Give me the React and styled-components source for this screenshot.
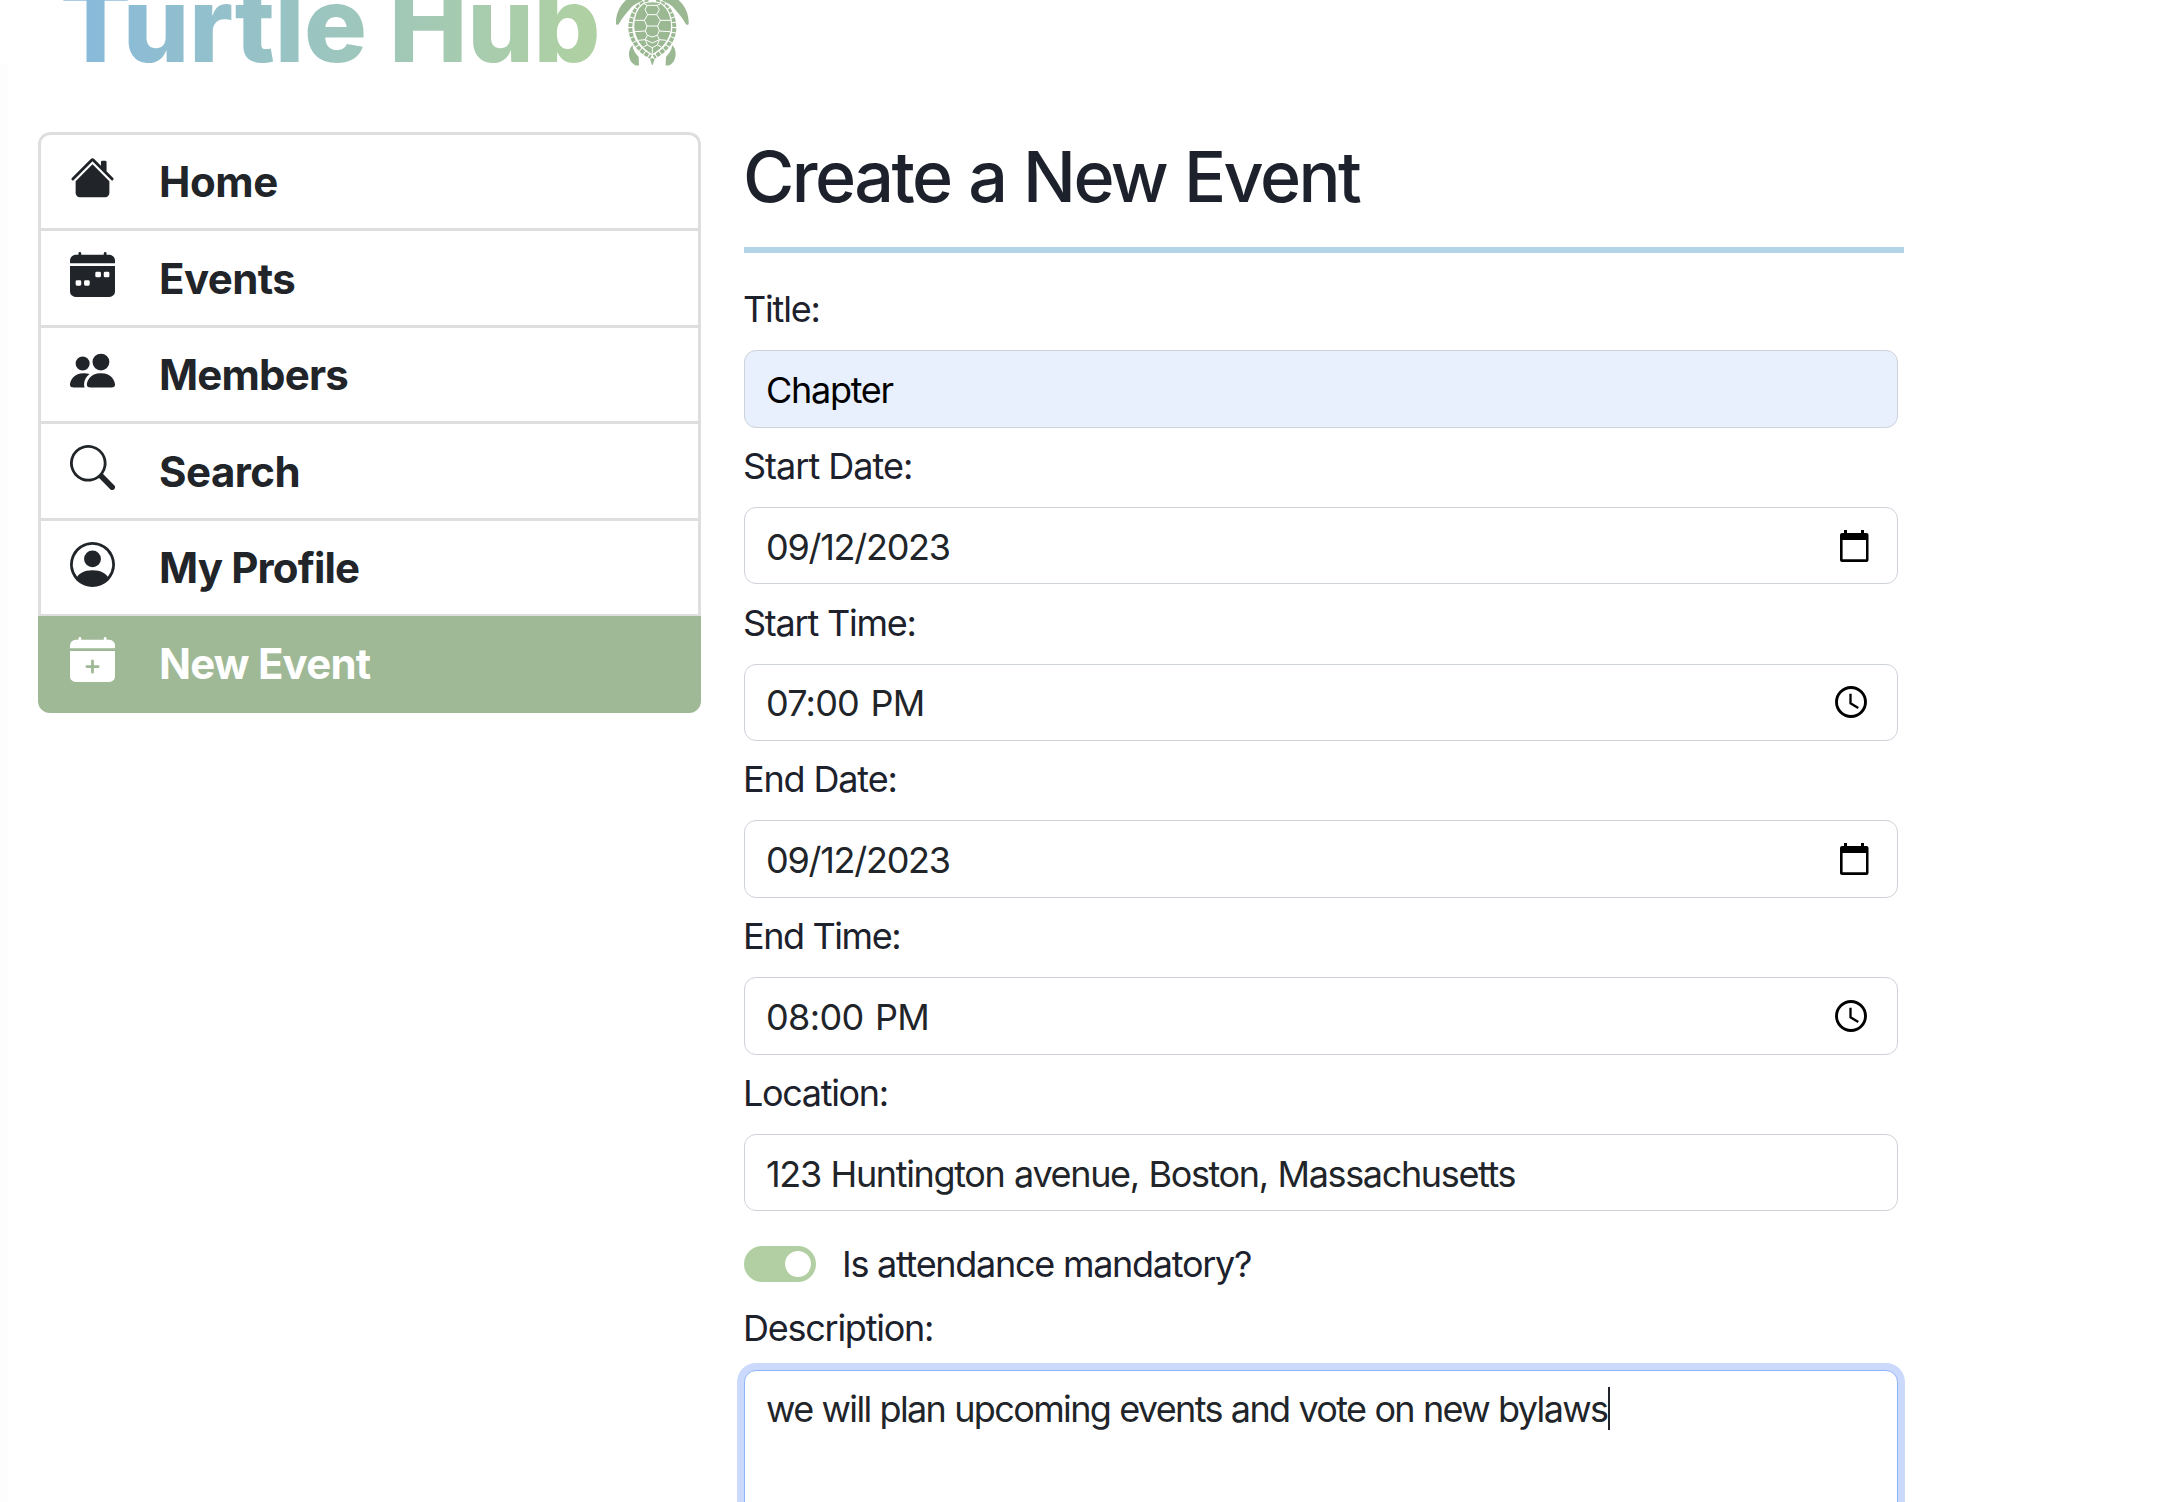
import React from "react";
import styled, { createGlobalStyle } from "styled-components";
import {
  BsHouseFill,
  BsCalendarWeekFill,
  BsPeopleFill,
  BsSearch,
  BsPersonCircle,
  BsCalendarPlusFill,
} from "react-icons/bs";

const GlobalStyle = createGlobalStyle`
  *, *::before, *::after { box-sizing: border-box; }
  body {
    margin: 0;
    background: #fff;
    color: #212529;
    font-family: Inter, "Liberation Sans", sans-serif;
  }
`;

const Viewport = styled.div`
  height: 1502px;
  overflow: hidden;
  background: linear-gradient(#fdfdfd, #fdfdfd) 0 64px / 8px 100% no-repeat, #fff;
`;

const Header = styled.header`
  display: flex;
  align-items: flex-start;
  height: 127px;
  margin-top: -40px;
  padding-left: 60px;
`;

const Brand = styled.div`
  width: 555px;
  white-space: nowrap;
  line-height: 127px;
`;

const BrandText = styled.span`
  font-size: 105px;
  font-weight: 800;
  letter-spacing: -0.5px;
  color: transparent;
  background: linear-gradient(90deg, #88badb 3%, #afd0a3 96%);
  background-clip: text;
  -webkit-background-clip: text;
`;

const TurtleMark = styled.svg`
  width: 74px;
  height: 100px;
  margin-top: 7px;
  flex: none;
`;

const Layout = styled.div`
  display: flex;
  align-items: flex-start;
  gap: 43px;
  padding: 45px 0 0 38px;
`;

const Nav = styled.nav`
  display: flex;
  flex-direction: column;
  width: 663px;
  flex: none;
  border-radius: 12px;
  overflow: hidden;
`;

const NavItem = styled.a`
  display: flex;
  align-items: flex-start;
  gap: 44px;
  height: 96px;
  padding: 20px 29px 0;
  border: 3px solid #dedede;
  border-bottom: 0;
  color: #212529;

  &:nth-child(even) {
    height: 97px;
    padding-top: 21px;
  }
  &:first-child { border-radius: 12px 12px 0 0; }

  svg { width: 45px; height: 45px; flex: none; }
  &:nth-child(5) svg { margin-top: 1px; }

  &&[aria-current="page"] {
    height: 99px;
    padding: 21px 32px 0;
    border-width: 2px 0 0;
    background: #9fb896;
    color: #fff;
  }
`;

const NavLabel = styled.span`
  margin-top: 1px;
  font-size: 42px;
  font-weight: 700;
  line-height: 51px;
  letter-spacing: ${(p) => p.$track}px;
  white-space: nowrap;
`;

const Main = styled.main`
  width: 1160px;
  padding-top: 2px;
  color: #1c212c;
`;

const Title = styled.h1`
  margin: 0;
  padding-bottom: 28px;
  border-bottom: 6px solid #b4d5e8;
  font-size: 70px;
  font-weight: 500;
  line-height: 85px;
  letter-spacing: -2.55px;
  word-spacing: 1.5px;
  text-indent: -1px;
  white-space: nowrap;
`;

const Form = styled.form`
  display: flex;
  flex-direction: column;
  width: 1154px;
  padding-top: 34px;
`;

const Field = styled.div`
  display: flex;
  flex-direction: column;
  gap: 19px;
  margin-bottom: 16.3px;
`;

const Label = styled.label`
  font-size: 36px;
  line-height: 44px;
  letter-spacing: ${(p) => p.$track}px;
  text-indent: ${(p) => p.$indent ?? -1}px;
  white-space: nowrap;
`;

const Control = styled.div`
  display: flex;
  align-items: center;
  height: 77.5px;
  padding-left: 21px;
  padding-right: ${(p) => p.$inset || 22}px;
  border: 1px solid #ced2d9;
  border-radius: 12px;
  background: ${(p) => (p.$filled ? "#e8effd" : "#fff")};

  svg { flex: none; }
`;

const Input = styled.input`
  flex: 1;
  min-width: 0;
  height: 46px;
  padding: 2px 0 0;
  border: 0;
  outline: 0;
  background: transparent;
  color: ${(p) => (p.$filled ? "#000" : "#212529")};
  font: 400 36px/44px Inter, "Liberation Sans", sans-serif;
  letter-spacing: ${(p) => p.$track}px;
  word-spacing: ${(p) => p.$gap || 0}px;
`;

const SwitchRow = styled.div`
  display: flex;
  align-items: center;
  gap: 26px;
  height: 44px;
  margin-top: 14px;
  margin-bottom: 20px;
`;

const Switch = styled.span`
  display: flex;
  justify-content: flex-end;
  align-items: center;
  width: 72px;
  height: 36px;
  padding-right: 5px;
  border-radius: 18px;
  background: #b1cfa3;
`;

const Knob = styled.span`
  width: 26px;
  height: 26px;
  border-radius: 50%;
  background: #fff;
`;

const TextArea = styled.div`
  display: flex;
  align-items: flex-start;
  height: 230px;
  margin-top: 20px;
  padding: 16px 21px;
  border: 1px solid #8fb5f8;
  border-radius: 12px;
  box-shadow: 0 0 0 7px #cbd9fc;
  background: #fff;
  color: #212529;
  font-size: 36px;
  line-height: 44px;
  letter-spacing: -1.63px;
  word-spacing: 0.45px;
  white-space: nowrap;
`;

const Caret = styled.span`
  width: 2px;
  height: 43px;
  margin-left: 1px;
  background: #212529;
`;

function TurtleHalf() {
  return (
    <>
      <path d="M48 70C47 44 57 16 82-4C98-18 118-20 128-12L126 2C112 7 98 14 88 28C76 42 67 52 57 70Q51 77 48 70Z" />
      <path d="M98 134C84 145 83 175 97 188C105 197 117 197 117 193L116 170C108 161 98 150 98 134Z" />
      <path
        d="M146 4C112 8 92 42 91 82C92 122 118 152 153 170"
        fill="none"
        stroke="#9ab891"
        strokeWidth="12"
        strokeDasharray="12 3"
      />
    </>
  );
}

function Turtle() {
  return (
    <TurtleMark viewBox="45 -100 222 300" fill="#9ab891">
      <ellipse cx="157" cy="-40" rx="24" ry="34" />
      <TurtleHalf />
      <g transform="matrix(-1 0 0 1 314 0)">
        <TurtleHalf />
      </g>
      <path
        d="M128 11C144 2 170 2 186 11C206 26 215 50 215 80C213 114 190 146 157 163C124 146 103 114 101 80C101 50 108 26 128 11Z"
        stroke="#fff"
        strokeWidth="3.5"
      />
      <path
        d="M134 12L142 15H171L180 12M142 15L135 28L143 43H170L178 28L171 15M143 43L133 60L141 77H173L181 60L170 43M133 60H103M181 60H212M141 77L136 92L142 105L157 110L172 105L178 92L173 77M136 92L104 94M178 92L210 94M142 105L136 118L157 128L178 118L172 105M136 118L115 120M178 118L199 120M136 118L142 134L157 142L172 134L178 118M142 134L130 140M172 134L184 140M157 142V160"
        fill="none"
        stroke="#fff"
        strokeWidth="3"
      />
      <path d="M150 177L157 173L164 177L158 194H156Z" />
    </TurtleMark>
  );
}

function CalendarIcon() {
  return (
    <svg width="29" height="32" viewBox="0 0 29 32">
      <path
        fillRule="evenodd"
        d="M4 0h3v3h14V0h3v3h2.500a2 2 0 0 1 2 2v25a2 2 0 0 1-2 2h-24.500a2 2 0 0 1-2-2V5a2 2 0 0 1 2-2H4zM2.600 10v19.200h23.400V10z"
      />
    </svg>
  );
}

function ClockIcon() {
  return (
    <svg width="32" height="32" viewBox="0 0 32 32" fill="none" stroke="#000">
      <circle cx="16" cy="16" r="14.500" strokeWidth="2.900" />
      <path d="M15.500 7.700v9.600l7.800 4.600" strokeWidth="2.300" />
    </svg>
  );
}

const navItems = [
  { label: "Home", icon: BsHouseFill, track: -0.39 },
  { label: "Events", icon: BsCalendarWeekFill, track: -0.6 },
  { label: "Members", icon: BsPeopleFill, track: -0.8 },
  { label: "Search", icon: BsSearch, track: -0.52 },
  { label: "My Profile", icon: BsPersonCircle, track: -0.85 },
  { label: "New Event", icon: BsCalendarPlusFill, track: -0.8, current: true },
];

const fields = [
  { label: "Title:", track: -1.17, value: "Chapter", valueTrack: -1.3, filled: true },
  { label: "Start Date:", track: -0.99, value: "09/12/2023", valueTrack: -1.27, kind: "date" },
  { label: "Start Time:", track: -1.23, value: "07:00 PM", valueTrack: -0.8, gap: 2.3, kind: "time" },
  { label: "End Date:", track: -1.15, value: "09/12/2023", valueTrack: -1.27, kind: "date" },
  { label: "End Time:", track: -1.41, value: "08:00 PM", valueTrack: -0.65, gap: 2, kind: "time" },
  {
    label: "Location:",
    track: -1.33,
    value: "123 Huntington avenue, Boston, Massachusetts",
    valueTrack: -1.36,
    gap: 1,
  },
];

const insets = { date: 28, time: 30 };

export default function App() {
  return (
    <Viewport>
      <GlobalStyle />
      <Header>
        <Brand>
          <BrandText>Turtle Hub</BrandText>
        </Brand>
        <Turtle />
      </Header>
      <Layout>
        <Nav>
          {navItems.map(({ label, icon: Icon, track, current }) => (
            <NavItem key={label} aria-current={current ? "page" : undefined}>
              <Icon />
              <NavLabel $track={track}>{label}</NavLabel>
            </NavItem>
          ))}
        </Nav>
        <Main>
          <Title>Create a New Event</Title>
          <Form>
            {fields.map((f) => (
              <Field key={f.label}>
                <Label $track={f.track}>{f.label}</Label>
                <Control $filled={f.filled} $inset={insets[f.kind]}>
                  <Input
                    readOnly
                    value={f.value}
                    $track={f.valueTrack}
                    $gap={f.gap}
                    $filled={f.filled}
                  />
                  {f.kind === "date" && <CalendarIcon />}
                  {f.kind === "time" && <ClockIcon />}
                </Control>
              </Field>
            ))}
            <SwitchRow>
              <Switch>
                <Knob />
              </Switch>
              <Label $track={-1.28} $indent={0}>Is attendance mandatory?</Label>
            </SwitchRow>
            <Label $track={-1.25}>Description:</Label>
            <TextArea>
              we will plan upcoming events and vote on new bylaws
              <Caret />
            </TextArea>
          </Form>
        </Main>
      </Layout>
    </Viewport>
  );
}
